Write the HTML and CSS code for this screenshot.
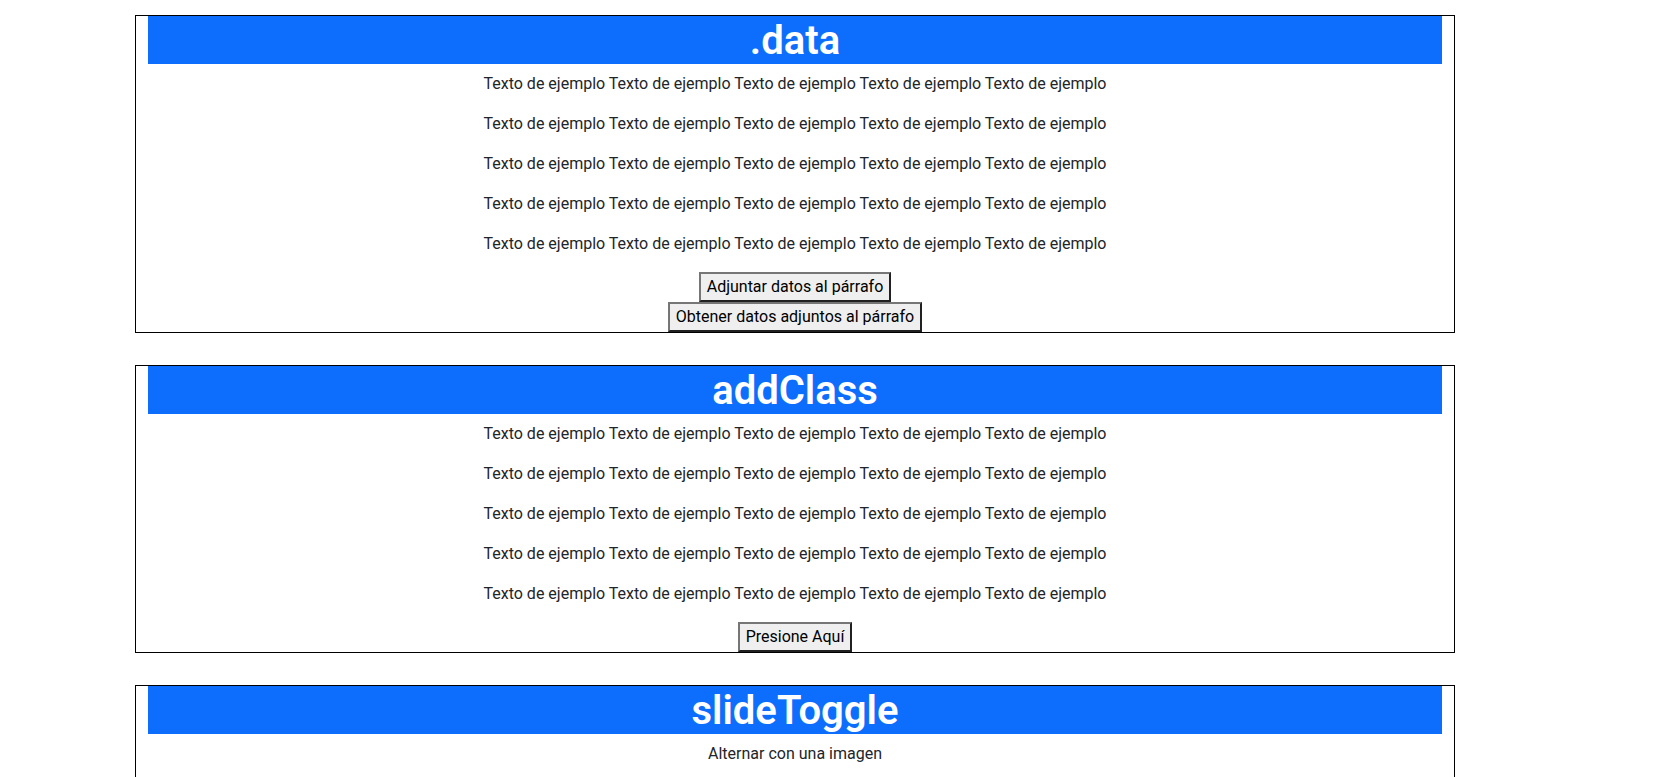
FILE: index.html
```html
<!DOCTYPE html>
<html lang="es">
<head>
<meta charset="utf-8">
<title>jQuery ejemplos</title>
<link rel="stylesheet" href="styles.css">
</head>
<body>
<main class="page">
  <section class="box">
    <h1 class="title">.data</h1>
    <p class="txt">Texto de ejemplo Texto de ejemplo Texto de ejemplo Texto de ejemplo Texto de ejemplo</p>
    <p class="txt">Texto de ejemplo Texto de ejemplo Texto de ejemplo Texto de ejemplo Texto de ejemplo</p>
    <p class="txt">Texto de ejemplo Texto de ejemplo Texto de ejemplo Texto de ejemplo Texto de ejemplo</p>
    <p class="txt">Texto de ejemplo Texto de ejemplo Texto de ejemplo Texto de ejemplo Texto de ejemplo</p>
    <p class="txt">Texto de ejemplo Texto de ejemplo Texto de ejemplo Texto de ejemplo Texto de ejemplo</p>
    <button class="btn" type="button">Adjuntar datos al párrafo</button>
    <button class="btn" type="button">Obtener datos adjuntos al párrafo</button>
  </section>
  <section class="box">
    <h1 class="title">addClass</h1>
    <p class="txt">Texto de ejemplo Texto de ejemplo Texto de ejemplo Texto de ejemplo Texto de ejemplo</p>
    <p class="txt">Texto de ejemplo Texto de ejemplo Texto de ejemplo Texto de ejemplo Texto de ejemplo</p>
    <p class="txt">Texto de ejemplo Texto de ejemplo Texto de ejemplo Texto de ejemplo Texto de ejemplo</p>
    <p class="txt">Texto de ejemplo Texto de ejemplo Texto de ejemplo Texto de ejemplo Texto de ejemplo</p>
    <p class="txt">Texto de ejemplo Texto de ejemplo Texto de ejemplo Texto de ejemplo Texto de ejemplo</p>
    <button class="btn" type="button">Presione Aquí</button>
  </section>
  <section class="box">
    <h1 class="title">slideToggle</h1>
    <p class="txt">Alternar con una imagen</p>
    <button class="btn" type="button">Alternar</button>
  </section>
</main>
</body>
</html>
```
FILE: styles.css
```css
html, body {
  margin: 0;
  padding: 0;
  background: #fff;
}
body {
  font-family: Roboto, "Open Sans", "Liberation Sans", sans-serif;
  font-size: 16px;
  line-height: 1.5;
  color: #212529;
}
.page {
  padding-top: 15px;
}
.box {
  box-sizing: border-box;
  width: 1320px;
  margin: 0 0 32px 135px;
  border: 1px solid #000;
  padding: 0 12px;
  text-align: center;
}
.title {
  margin: 0 0 8px;
  padding-top: 2px;
  background: #0d6efd;
  color: #fff;
  font-size: 40px;
  line-height: 46px;
  font-weight: 600;
}
.txt {
  margin: 0 0 16px;
}
.btn {
  display: block;
  margin: 0 auto;
  box-sizing: border-box;
  height: 30px;
  padding: 1px 6px;
  font-family: inherit;
  font-size: 16px;
  line-height: 24px;
  color: #000;
  background: #efefef;
  border: 2px outset #767676;
  border-radius: 0;
}
```
